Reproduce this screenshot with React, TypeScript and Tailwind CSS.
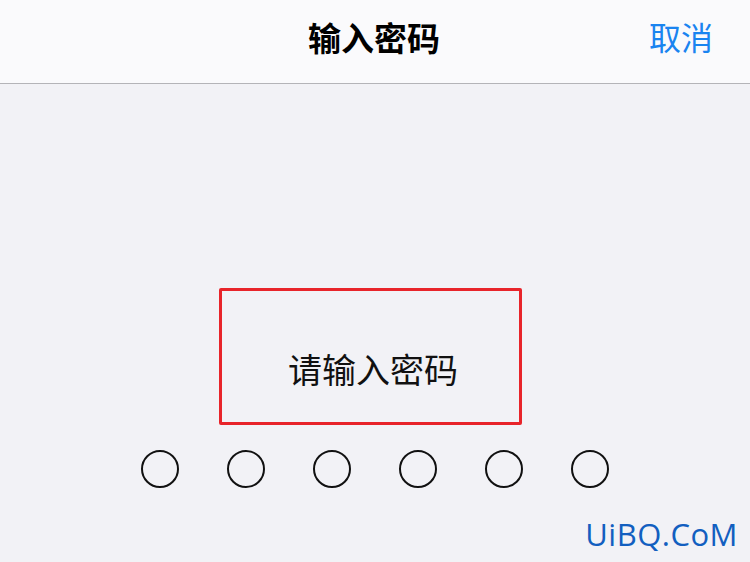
import React from "react";

const font = { fontFamily: '"Noto Sans CJK SC", "Noto Sans", sans-serif' };

export default function App() {
  return (
    <div className="w-[750px] h-[562px] bg-[#f2f2f6] flex flex-col overflow-hidden" style={font}>
      <div className="h-[84px] bg-[#fafafc] border-b-[1.5px] border-[#b4b4b8] relative flex items-center justify-center">
        <div className="text-[33px] font-bold text-black leading-none ml-[-2px] mt-[-8px]">输入密码</div>
        <div className="absolute right-[37px] top-[20px] text-[32px] text-[#1a84f0] leading-none">取消</div>
      </div>
      <div className="flex flex-col items-center pt-[204px]">
        <div className="w-[303px] h-[137px] border-[3px] border-[#e8242a] rounded-[2px] flex items-center justify-center ml-[-10px]">
          <div className="text-[34px] text-[#111] leading-none mt-[24px] ml-[6px]">请输入密码</div>
        </div>
        <div className="flex gap-[48px] mt-[25px] ml-[-1px]">
          {[0, 1, 2, 3, 4, 5].map((i) => (
            <div key={i} className="w-[38px] h-[38px] rounded-full border-[2.5px] border-[#111]" />
          ))}
        </div>
        <div className="self-end mr-[12px] mt-[31px] text-[31px] text-[#125fc0] leading-none tracking-[0.5px]" style={{ fontFamily: '"Open Sans", "DejaVu Sans", sans-serif' }}>
          UiBQ.CoM
        </div>
      </div>
    </div>
  );
}
